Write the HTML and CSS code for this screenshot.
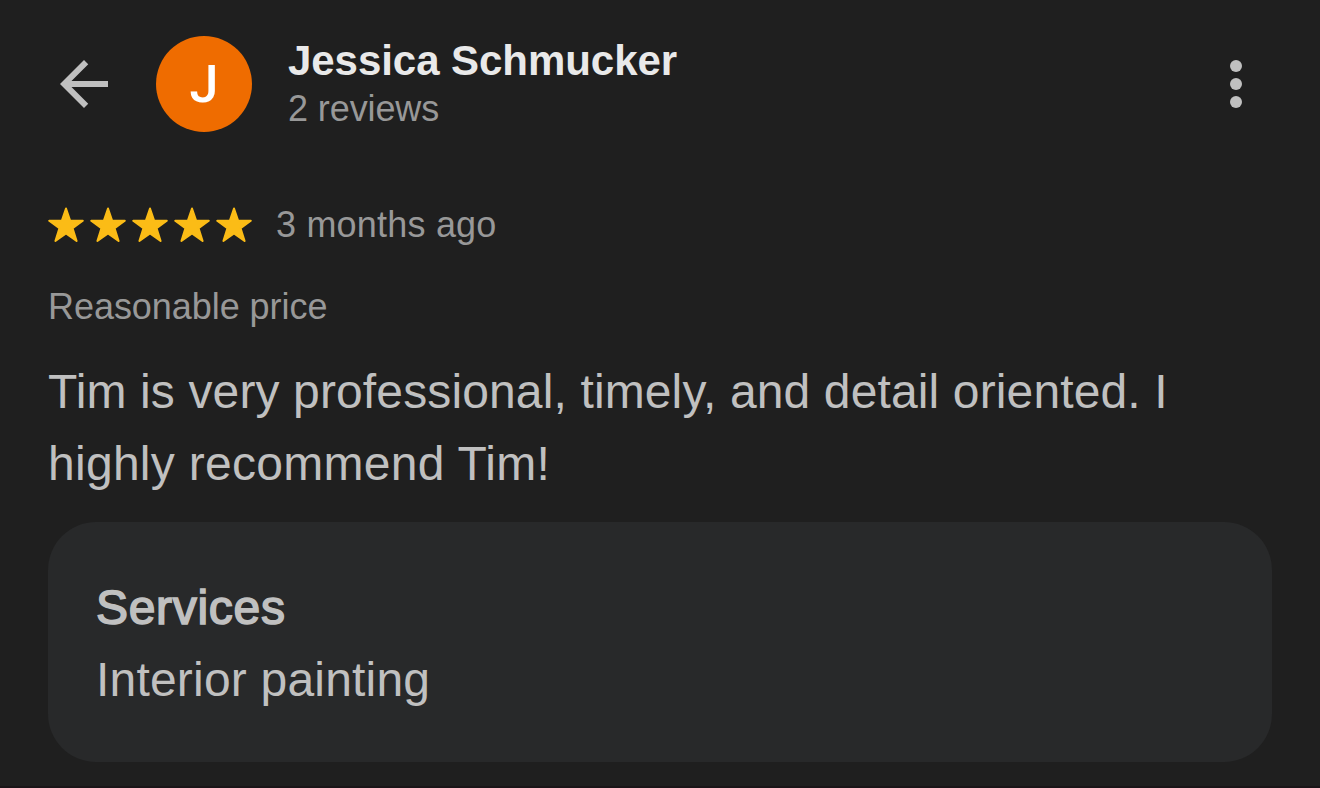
FILE: index.html
```html
<!doctype html>
<html lang="en">
<head>
    <meta charset="utf-8">
    <title>Jessica Schmucker - Review</title>
    <link rel="stylesheet" href="styles.css">
</head>

<body>
    <div class="review">
        <header class="header">
            <svg class="back" width="48" height="48" viewBox="4 4 16 16">
                <path d="M20 11H7.830l5.590-5.590L12 4l-8 8 8 8 1.410-1.410L7.830 13H20v-2z"/>
            </svg>
            <div class="avatar">J</div>
            <div class="author">
                <h1 class="name">Jessica Schmucker</h1>
                <p class="count">2 reviews</p>
            </div>
            <svg class="menu" width="14" height="50" viewBox="0 0 14 50">
                <circle cx="7" cy="7" r="6"/>
                <circle cx="7" cy="25" r="6"/>
                <circle cx="7" cy="43" r="6"/>
            </svg>
        </header>

        <div class="rating">
            <svg class="stars" width="204" height="36" viewBox="0 0 204 36">
                <defs>
                    <path id="star" d="M18 1.500l4.200 12.300H34.800L24.600 21.200l4 12.800L18 26.400 7.400 34l4-12.800L1.200 13.800h12.600z"/>
                </defs>
                <use href="#star" x="0"/>
                <use href="#star" x="42"/>
                <use href="#star" x="84"/>
                <use href="#star" x="126"/>
                <use href="#star" x="168"/>
            </svg>
            <span class="date">3 months ago</span>
        </div>

        <p class="tag">Reasonable price</p>
        <p class="text">Tim is very professional, timely, and detail oriented. I<br><span class="last-line">highly recommend Tim!</span></p>

        <section class="services">
            <h2 class="services-title">Services</h2>
            <p class="services-item">Interior painting</p>
        </section>
    </div>
</body>
</html>
```

FILE: styles.css
```css
* {
    box-sizing: border-box;
}

body {
    margin: 0;
    background: #1f1f1f;
    color: #c0c0c0;
    font-family: "Liberation Sans", Arial, sans-serif;
}

h1, h2, p {
    margin: 0;
}

.review {
    height: 788px;
    padding: 36px 48px 0;
    border-bottom: 2px solid #1a1518;
    overflow: hidden;
}

.header {
    display: flex;
    height: 96px;
    padding-left: 12px;
}

.back {
    margin-top: 24px;
    fill: #c0c0c0;
}

.avatar {
    width: 96px;
    height: 96px;
    margin-left: 48px;
    border-radius: 50%;
    background: #ef6c00;
    color: #fff;
    font-family: Roboto, sans-serif;
    font-size: 52px;
    font-weight: 500;
    line-height: 97px;
    text-align: center;
}

.author {
    flex: 1;
    margin-left: 36px;
    white-space: nowrap;
}

.name {
    color: #e9e9e9;
    font-size: 42px;
    letter-spacing: -0.05px;
    line-height: 50px;
}

.count {
    color: #989898;
    font-size: 36px;
    letter-spacing: -0.1px;
    line-height: 45px;
}

.menu {
    margin: 23px 29px 0 0;
    fill: #c0c0c0;
}

.rating {
    display: flex;
    align-items: center;
    height: 44px;
    margin-top: 71px;
}

.stars {
    fill: #fbbc16;
    stroke: #fbbc16;
    stroke-width: 2;
    stroke-linejoin: round;
}

.date {
    margin-left: 24px;
    color: #989898;
    font-size: 36px;
    letter-spacing: 0.2px;
    line-height: 44px;
}

.tag {
    margin-top: 37px;
    color: #989898;
    font-size: 36px;
    letter-spacing: -0.05px;
    line-height: 45px;
}

.text {
    margin-top: 27px;
    font-size: 48px;
    letter-spacing: 0.13px;
    line-height: 72px;
    white-space: nowrap;
}

.last-line {
    letter-spacing: 0.28px;
}

.services {
    height: 240px;
    margin-top: 22px;
    padding: 50px 48px;
    border-radius: 48px;
    background: #28292a;
}

/* medium weight, between regular and bold */
.services-title {
    font-size: 48px;
    font-weight: normal;
    letter-spacing: 0.7px;
    line-height: 72px;
    -webkit-text-stroke: 1.6px #c0c0c0;
}

.services-item {
    font-size: 48px;
    letter-spacing: 0.2px;
    line-height: 72px;
}
```
